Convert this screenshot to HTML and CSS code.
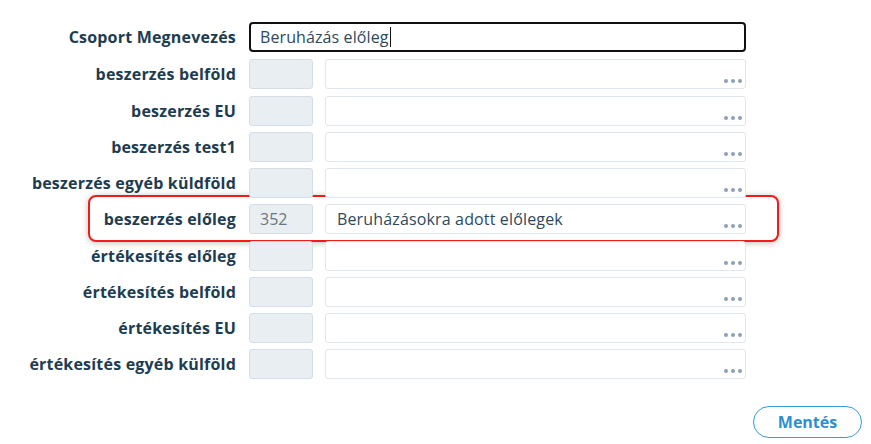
FILE: index.html
```html
<!DOCTYPE html>
<html lang="hu">
<head>
<meta charset="utf-8">
<link rel="stylesheet" href="styles.css">
</head>
<body>
<div class="form">
  <div class="row">
    <label class="label">Csoport Megnevezés</label>
    <div class="main-input">Beruházás előleg<span class="caret"></span></div>
  </div>
  <div class="row">
    <label class="label">beszerzés belföld</label>
    <div class="code"></div>
    <div class="name"><span class="dots"><i></i><i></i><i></i></span></div>
  </div>
  <div class="row">
    <label class="label">beszerzés EU</label>
    <div class="code"></div>
    <div class="name"><span class="dots"><i></i><i></i><i></i></span></div>
  </div>
  <div class="row">
    <label class="label">beszerzés test1</label>
    <div class="code"></div>
    <div class="name"><span class="dots"><i></i><i></i><i></i></span></div>
  </div>
  <div class="row">
    <label class="label">beszerzés egyéb küldföld</label>
    <div class="code"></div>
    <div class="name"><span class="dots"><i></i><i></i><i></i></span></div>
  </div>
  <div class="row highlighted">
    <label class="label">beszerzés előleg</label>
    <div class="code">352</div>
    <div class="name">Beruházásokra adott előlegek<span class="dots"><i></i><i></i><i></i></span></div>
    <div class="highlight"></div>
  </div>
  <div class="row">
    <label class="label">értékesítés előleg</label>
    <div class="code"></div>
    <div class="name"><span class="dots"><i></i><i></i><i></i></span></div>
  </div>
  <div class="row">
    <label class="label">értékesítés belföld</label>
    <div class="code"></div>
    <div class="name"><span class="dots"><i></i><i></i><i></i></span></div>
  </div>
  <div class="row">
    <label class="label">értékesítés EU</label>
    <div class="code"></div>
    <div class="name"><span class="dots"><i></i><i></i><i></i></span></div>
  </div>
  <div class="row">
    <label class="label">értékesítés egyéb külföld</label>
    <div class="code"></div>
    <div class="name"><span class="dots"><i></i><i></i><i></i></span></div>
  </div>
  <div class="actions">
    <button class="save">Mentés</button>
  </div>
</div>
</body>
</html>
```

FILE: styles.css
```css
html, body {
  margin: 0;
  padding: 0;
  background: #ffffff;
}
body {
  font-family: "Open Sans", "Noto Sans", sans-serif;
  color: #1d3c50;
}
.form {
  display: flex;
  flex-direction: column;
  gap: 6.25px;
  padding-top: 22px;
  width: 871px;
}
.row {
  position: relative;
  display: flex;
  align-items: center;
  height: 30px;
}
.row:first-child {
  height: 30px;
  margin-bottom: 1px;
}
.label {
  width: 236px;
  margin-right: 13px;
  text-align: right;
  font-weight: 700;
  font-size: 16px;
  letter-spacing: 0.2px;
  color: #1d3c50;
  white-space: nowrap;
  position: relative;
  z-index: 1;
}
.main-input {
  box-sizing: border-box;
  width: 497px;
  height: 30px;
  border: 2px solid #111;
  border-radius: 4px;
  padding: 0 9px;
  font-size: 16px;
  letter-spacing: 0.1px;
  line-height: 26px;
  color: #2c4a5e;
  display: flex;
  align-items: center;
}
.caret {
  display: inline-block;
  width: 1px;
  height: 20px;
  background: #111;
  margin-left: 1px;
}
.code {
  box-sizing: border-box;
  width: 64px;
  height: 30px;
  background: #e9eef3;
  border: 1px solid #d5dee7;
  border-radius: 3px;
  margin-right: 12px;
  font-size: 16px;
  line-height: 28px;
  padding-left: 10px;
  color: #6b7680;
  position: relative;
  z-index: 1;
}
.name {
  box-sizing: border-box;
  position: relative;
  z-index: 1;
  width: 421px;
  height: 30px;
  border: 1px solid #dfe6ee;
  border-radius: 3px;
  background: #fff;
  font-size: 16px;
  letter-spacing: 0.15px;
  line-height: 28px;
  padding-left: 11px;
  color: #2c4a5e;
}
.dots {
  position: absolute;
  right: 3px;
  bottom: 5px;
  display: flex;
  gap: 3px;
}
.dots i {
  display: block;
  width: 4px;
  height: 4px;
  border-radius: 50%;
  background: #8ba1b8;
}
.highlight {
  position: absolute;
  left: 88px;
  top: -9px;
  width: 691px;
  height: 47px;
  box-sizing: border-box;
  border: 2px solid #f21a1a;
  border-radius: 8px;
  box-shadow: 0 1px 6px rgba(0, 0, 0, 0.25);
  background: #fff;
  z-index: 0;
}
.actions {
  display: flex;
  justify-content: flex-end;
  padding-right: 9px;
  margin-top: 20px;
}
.save {
  box-sizing: border-box;
  width: 109px;
  height: 32px;
  border: 1.5px solid #3a9ad3;
  border-radius: 16px;
  background: #fff;
  color: #2e8fce;
  font-family: "Open Sans", "Noto Sans", sans-serif;
  font-weight: 700;
  font-size: 16px;
  padding: 0;
  cursor: pointer;
}
```
